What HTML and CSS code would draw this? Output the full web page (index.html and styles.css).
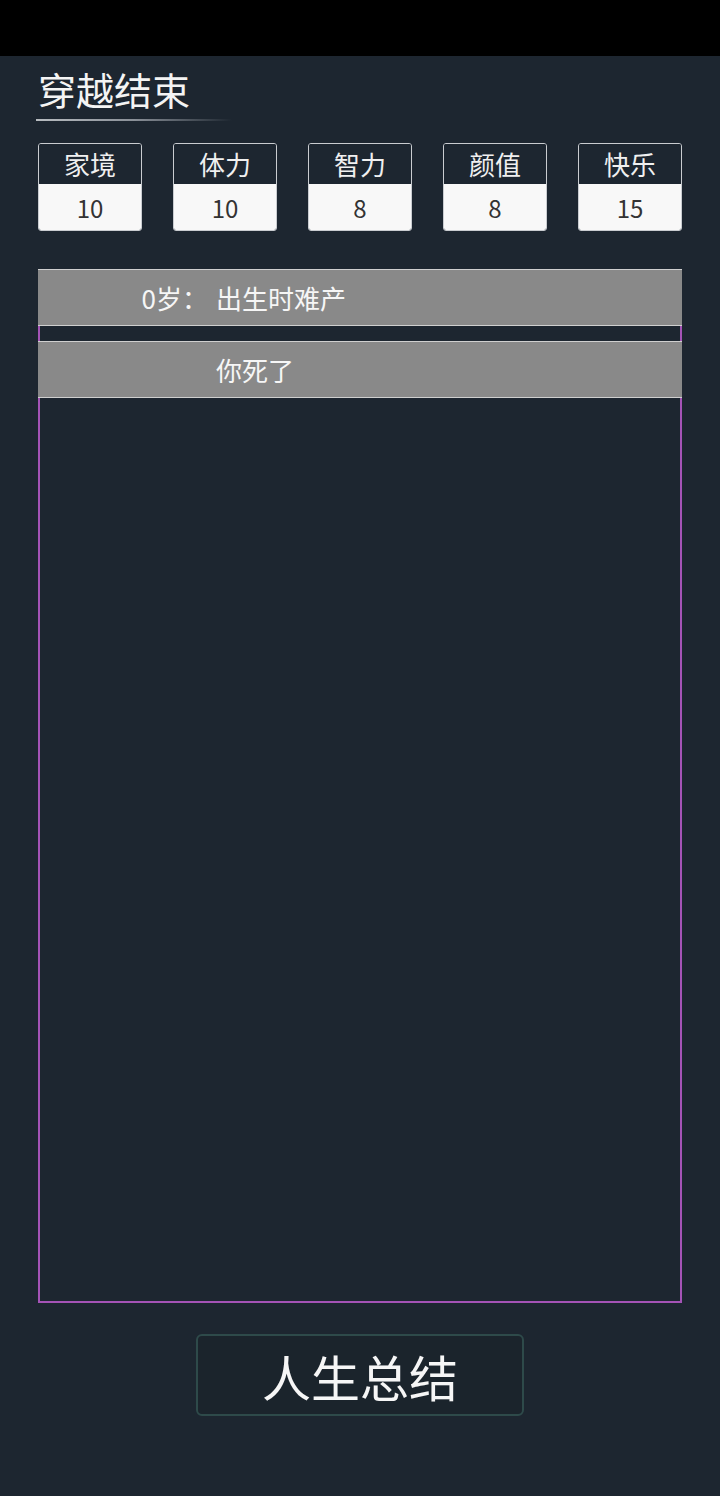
FILE: index.html
```html
<!DOCTYPE html>
<html lang="zh">
<head>
<meta charset="utf-8">
<title>穿越结束</title>
<link rel="stylesheet" href="styles.css">
</head>
<body>
<div class="statusbar"></div>
<main class="page">
  <h1 class="title">穿越结束</h1>
  <div class="title-line"></div>
  <div class="stats">
    <div class="stat"><div class="stat-name">家境</div><div class="stat-value">10</div></div>
    <div class="stat"><div class="stat-name">体力</div><div class="stat-value">10</div></div>
    <div class="stat"><div class="stat-name">智力</div><div class="stat-value">8</div></div>
    <div class="stat"><div class="stat-name">颜值</div><div class="stat-value">8</div></div>
    <div class="stat"><div class="stat-name">快乐</div><div class="stat-value">15</div></div>
  </div>
  <section class="log">
    <div class="log-item"><span class="age">0岁：</span><span class="event">出生时难产</span></div>
    <div class="log-item"><span class="age"></span><span class="event">你死了</span></div>
  </section>
  <div class="actions">
    <button class="summary-btn">人生总结</button>
  </div>
</main>
</body>
</html>
```
FILE: styles.css
```css
* { box-sizing: border-box; }
html, body {
  margin: 0;
  padding: 0;
  background: #1d2630;
  font-family: "Noto Sans CJK SC", "Noto Sans", sans-serif;
  color: #f2f2f2;
}
body { min-height: 1496px; }
.statusbar {
  height: 56px;
  background: #000;
}
.page {
  padding: 0 38px;
}
.title {
  margin: 10px 0 0 0;
  font-size: 38px;
  font-weight: 400;
  line-height: 46px;
  height: 46px;
  color: #f4f4f4;
}
.title-line {
  margin: 7px 0 0 -2px;
  width: 196px;
  height: 2px;
  background: linear-gradient(to right, #b8bcc0 0%, #8a9098 50%, rgba(120,128,136,0) 100%);
}
.stats {
  margin-top: 22px;
  display: flex;
  justify-content: space-between;
}
.stat {
  width: 104px;
  height: 88px;
  display: flex;
  flex-direction: column;
  border-radius: 3px;
  overflow: hidden;
  border: 1px solid #c9ccd0;
}
.stat-name {
  height: 41px;
  background: #1d2630;
  color: #f0f0f0;
  font-size: 26px;
  line-height: 40px;
  text-align: center;
}
.stat-value {
  flex: 1;
  background: #f8f8f8;
  color: #333;
  font-size: 24px;
  line-height: 48px;
  text-align: center;
}
.log {
  margin-top: 38px;
  height: 1034px;
  border: 2px solid #a453b6;
  border-top: none;
  display: flex;
  flex-direction: column;
  gap: 15px;
}
.log-item {
  margin: 0 -2px;
  height: 57px;
  background: #898989;
  border-top: 1px solid #cfcfcf;
  border-bottom: 1px solid #cfcfcf;
  display: flex;
  align-items: center;
  font-size: 26px;
  color: #f6f6f6;
}
.age {
  width: 178px;
  flex: none;
  text-align: right;
  padding-right: 8px;
}
.event { flex: 1; }
.actions {
  margin-top: 31px;
  display: flex;
  justify-content: center;
}
.summary-btn {
  width: 328px;
  height: 82px;
  background: #1b242c;
  border: 2px solid #2e4a4a;
  border-radius: 6px;
  color: #f6f6f6;
  font-family: "Noto Sans CJK SC", "Noto Sans", sans-serif;
  font-size: 49px;
  line-height: 1;
  padding: 0;
}
```
